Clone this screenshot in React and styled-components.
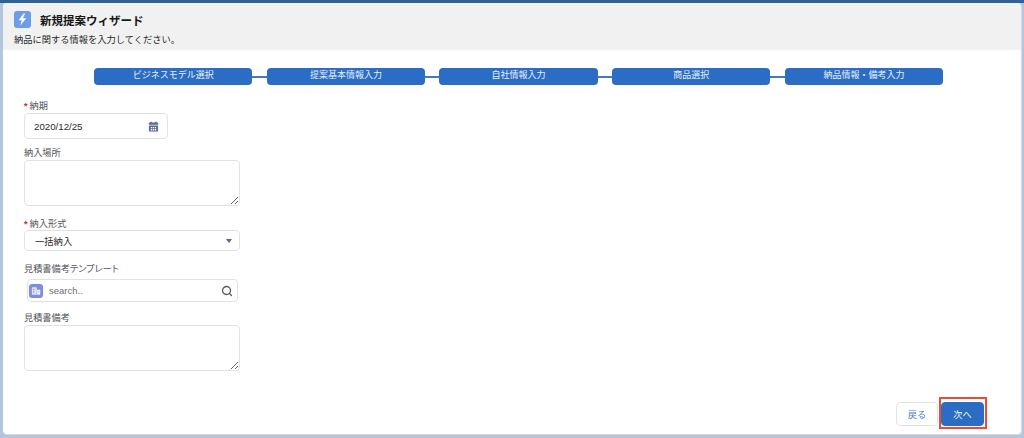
import React from 'react';
import styled, { createGlobalStyle } from 'styled-components';
import { Search } from 'lucide-react';

const Global = createGlobalStyle`
  html, body { margin: 0; padding: 0; }
  body {
    width: 1024px;
    height: 438px;
    overflow: hidden;
    font-family: "Liberation Sans", "Noto Sans CJK JP", sans-serif;
    color: #3e3e3c;
  }
`;

const Backdrop = styled.div`
  height: 438px;
  box-sizing: border-box;
  padding: 3px 3px 4px 3px;
  background: linear-gradient(to bottom, #2f6396 0, #2f6396 3px, #b3c6e0 3px, #b3c6e0 100%);
`;

const Modal = styled.div`
  height: 100%;
  display: flex;
  flex-direction: column;
  background: #fff;
  border-radius: 4px;
  overflow: hidden;
  box-shadow: 1px 1px 0 #d5dbe4;
`;

const Header = styled.header`
  height: 47px;
  flex: none;
  background: #f1f1f1;
  padding: 8px 0 0 11px;
  box-sizing: border-box;
`;

const TitleRow = styled.div`
  display: flex;
  align-items: center;
  gap: 9px;
  height: 17px;
`;

const Badge = styled.div`
  width: 17px;
  height: 17px;
  border-radius: 3px;
  background: #6f9ce6;
  display: flex;
  align-items: center;
  justify-content: center;
`;

const Title = styled.h1`
  margin: 0;
  font-size: 11.5px;
  font-weight: 700;
  color: #181818;
`;

const Subtitle = styled.p`
  margin: 6px 0 0;
  font-size: 9.25px;
  line-height: 13px;
  color: #2b2b2b;
`;

const Steps = styled.div`
  display: flex;
  align-items: center;
  margin: 18px 0 0 91px;
`;

const Step = styled.div`
  width: 158.4px;
  height: 17px;
  flex: none;
  box-sizing: border-box;
  border-radius: 4px;
  background: #2b6cc4;
  color: #e8f0fa;
  font-size: 9px;
  line-height: 14px;
  text-align: center;
`;

const Connector = styled.div`
  width: 14.3px;
  height: 2px;
  flex: none;
  background: #4179c8;
`;

const Form = styled.div`
  display: flex;
  flex-direction: column;
  margin: 15px 0 0 21px;
  width: 216px;
`;

const Field = styled.div`
  margin-bottom: ${p => p.$gap}px;
`;

const Label = styled.label`
  display: block;
  font-size: 9.2px;
  line-height: 12px;
  color: #54565a;
  font-feature-settings: "palt";
  margin-bottom: ${p => p.$gap}px;
`;

const Required = styled.span`
  color: #d0281e;
  font-weight: 700;
  margin-right: 2px;
`;

const DateBox = styled.div`
  width: 144px;
  height: 26px;
  box-sizing: border-box;
  border: 1px solid #e2e2e2;
  border-radius: 4px;
  display: flex;
  align-items: center;
  justify-content: space-between;
  padding: 0 8px 0 9px;
  font-size: 9.7px;
  color: #2b2b2b;
`;

const Area = styled.textarea`
  display: block;
  width: 216px;
  height: 46px;
  box-sizing: border-box;
  border: 1px solid #e2e2e2;
  border-radius: 4px;
  background: #fff;
  margin: 0;
  outline: none;
`;

const SelectBox = styled.div`
  height: 21px;
  box-sizing: border-box;
  border: 1px solid #e2e2e2;
  border-radius: 4px;
  display: flex;
  align-items: center;
  justify-content: space-between;
  padding: 0 7px 0 10px;
  font-size: 9.3px;
  color: #2b2b2b;
`;

const Caret = styled.span`
  width: 0;
  height: 0;
  border-left: 3.5px solid transparent;
  border-right: 3.5px solid transparent;
  border-top: 4px solid #56698f;
`;

const LookupBox = styled.div`
  width: 211px;
  height: 23px;
  margin-left: 3px;
  box-sizing: border-box;
  border: 1px solid #e2e2e2;
  border-radius: 4px;
  display: flex;
  align-items: center;
  padding: 0 4px 0 1px;
  font-size: 9.5px;
  color: #706e6b;
`;

const LookupIcon = styled.div`
  width: 14px;
  height: 14px;
  border-radius: 3px;
  background: #7f8de1;
  display: flex;
  align-items: center;
  justify-content: center;
  margin-right: 6px;
`;

const LookupText = styled.span`
  flex: 1;
`;

const Footer = styled.div`
  margin-top: auto;
  display: flex;
  justify-content: flex-end;
  align-items: center;
  gap: 3px;
  padding: 0 37px 8px 0;
`;

const Button = styled.button`
  display: block;
  height: 24px;
  width: ${p => p.$primary ? 43 : 42}px;
  box-sizing: border-box;
  border: 1px solid ${p => p.$primary ? '#2b6cc4' : '#e3e3e3'};
  border-radius: 4px;
  background: ${p => p.$primary ? '#2b6cc4' : '#fff'};
  color: ${p => p.$primary ? '#f1f5fb' : '#4a7fc9'};
  font-family: inherit;
  font-size: 9.2px;
  padding: 0;
`;

const Highlight = styled.div`
  position: relative;

  &::after {
    content: "";
    position: absolute;
    top: -5px;
    left: -2px;
    right: -3px;
    bottom: -3px;
    border: 2px solid #ec4a32;
    pointer-events: none;
  }
`;

const steps = ['ビジネスモデル選択', '提案基本情報入力', '自社情報入力', '商品選択', '納品情報・備考入力'];

const Bolt = () => (
  <svg width="13" height="13" viewBox="0 0 24 24">
    <path d="M14 1 5 13.5h5.5L8 23l11-13.5h-6.5L17 1z" fill="#fff" />
  </svg>
);

const CalendarIcon = () => (
  <svg width="11" height="11" viewBox="0 0 24 24" fill="#56698f">
    <rect x="5" y="1" width="3" height="4" rx="1" />
    <rect x="16" y="1" width="3" height="4" rx="1" />
    <path d="M2 5a2 2 0 0 1 2-2h16a2 2 0 0 1 2 2v3H2z" />
    <path fillRule="evenodd" d="M2 10h20v11a2 2 0 0 1-2 2H4a2 2 0 0 1-2-2zm4 3v3h3v-3zm4.5 0v3h3v-3zm4.5 0v3h3v-3zM6 17.5v3h3v-3zm4.5 0v3h3v-3zm4.5 0v3h3v-3z" />
  </svg>
);

const TemplateIcon = () => (
  <svg width="10" height="10" viewBox="0 0 24 24" fill="#fff">
    <path d="M2 4a1 1 0 0 1 1-1h10a1 1 0 0 1 1 1v17H2z" opacity="0.75" />
    <path d="M15 9h6a1 1 0 0 1 1 1v11h-7z" />
    <rect x="5" y="7" width="3" height="3" fill="#7f8de1" />
    <rect x="5" y="13" width="3" height="3" fill="#7f8de1" />
    <rect x="17" y="13" width="3" height="2" fill="#7f8de1" />
  </svg>
);

const App = () => {
  return (
    <>
      <Global />
      <Backdrop>
        <Modal>
          <Header>
            <TitleRow>
              <Badge><Bolt /></Badge>
              <Title>新規提案ウィザード</Title>
            </TitleRow>
            <Subtitle>納品に関する情報を入力してください。</Subtitle>
          </Header>
          <Steps>
            {steps.map((s, i) => (
              <React.Fragment key={s}>
                {i > 0 && <Connector />}
                <Step>{s}</Step>
              </React.Fragment>
            ))}
          </Steps>
          <Form>
            <Field $gap={8}>
              <Label $gap={1}><Required>*</Required>納期</Label>
              <DateBox>2020/12/25<CalendarIcon /></DateBox>
            </Field>
            <Field $gap={12}>
              <Label $gap={1}>納入場所</Label>
              <Area />
            </Field>
            <Field $gap={12}>
              <Label $gap={0}><Required>*</Required>納入形式</Label>
              <SelectBox>一括納入<Caret /></SelectBox>
            </Field>
            <Field $gap={10}>
              <Label $gap={4}>見積書備考テンプレート</Label>
              <LookupBox>
                <LookupIcon><TemplateIcon /></LookupIcon>
                <LookupText>search..</LookupText>
                <Search size={12} color="#5c5c5c" strokeWidth={2.6} />
              </LookupBox>
            </Field>
            <Field $gap={0}>
              <Label $gap={1}>見積書備考</Label>
              <Area />
            </Field>
          </Form>
          <Footer>
            <Button>戻る</Button>
            <Highlight><Button $primary>次へ</Button></Highlight>
          </Footer>
        </Modal>
      </Backdrop>
    </>
  );
};

export default App;
